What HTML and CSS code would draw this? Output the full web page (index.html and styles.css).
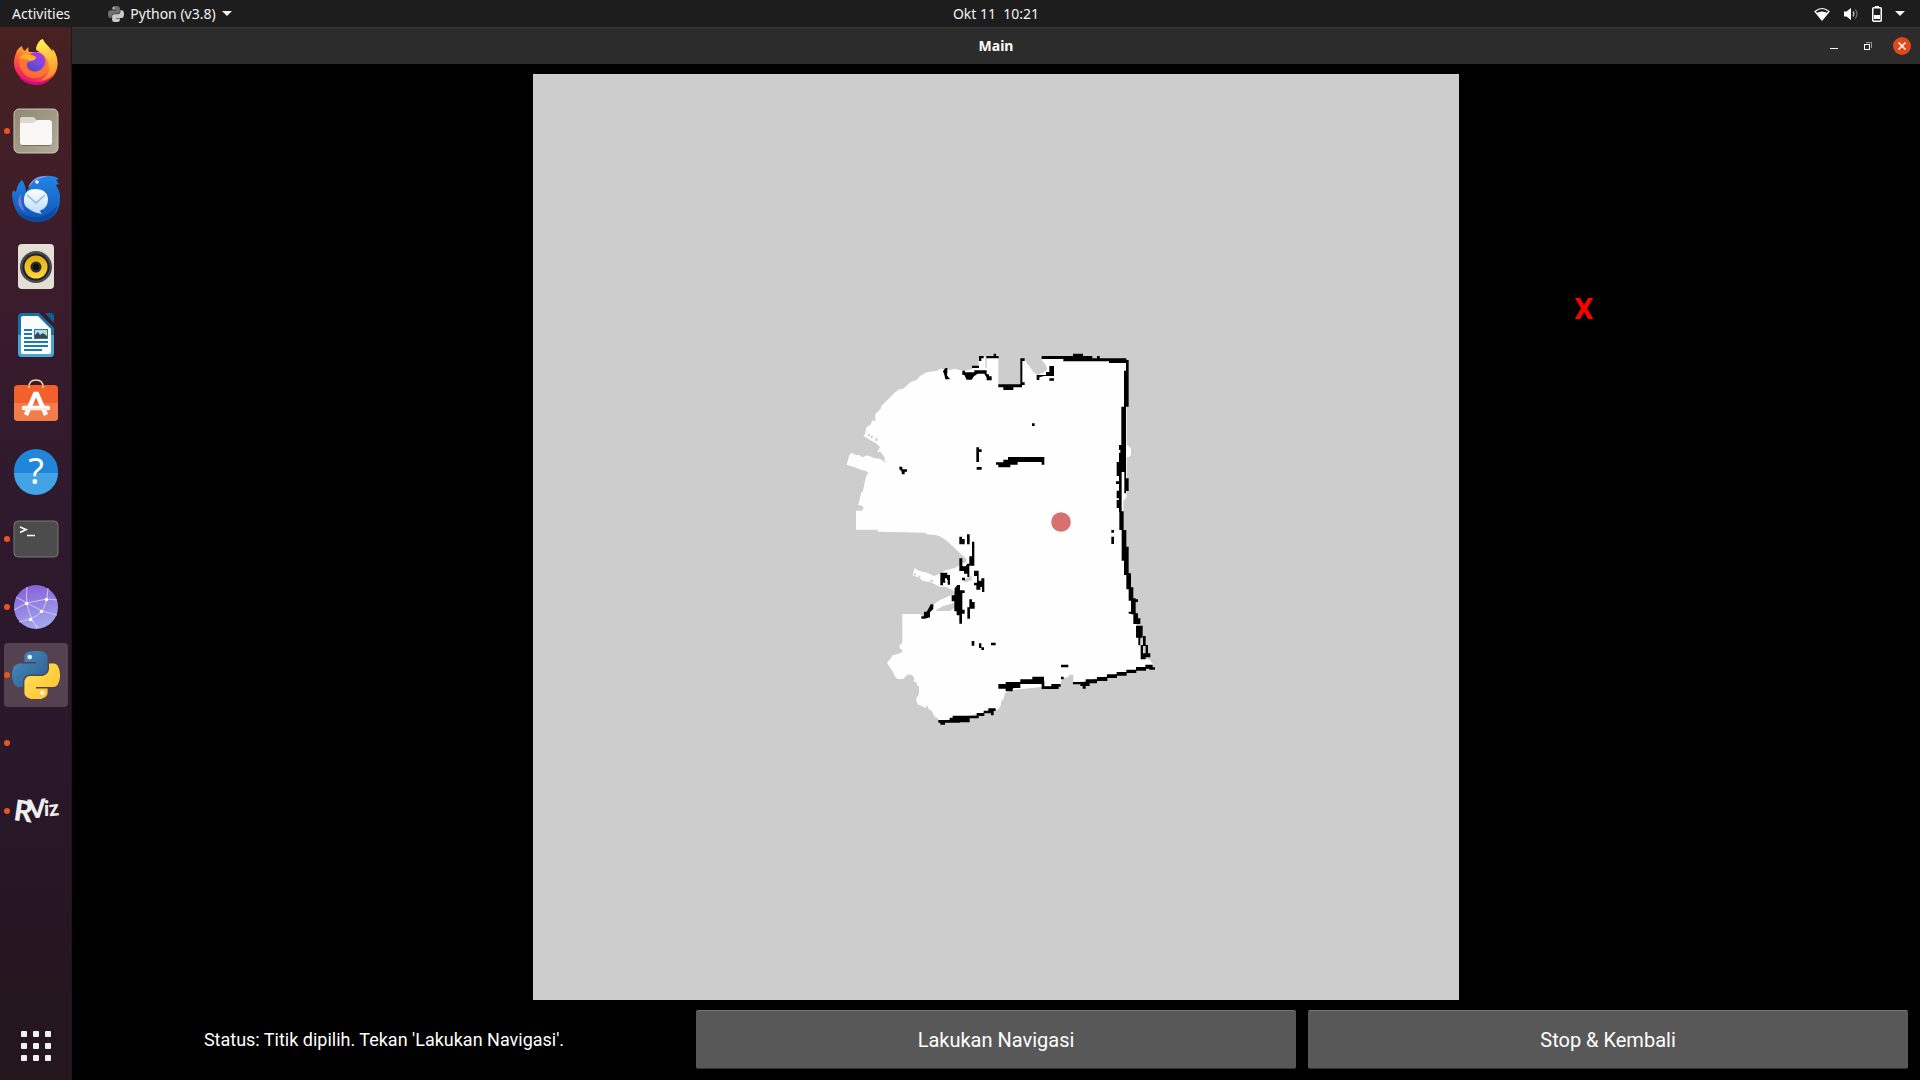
FILE: index.html
```html
<!DOCTYPE html>
<html lang="id">
<head>
<meta charset="utf-8">
<meta name="viewport" content="width=device-width, initial-scale=1">
<title>Main</title>
<link rel="stylesheet" href="styles.css">
</head>
<body>
<svg class="defs" aria-hidden="true">
  <defs>
    <path id="snake-a" d="M54.919 0c-4.584.021-8.961.412-12.813 1.094C30.76 3.099 28.7 7.295 28.7 15.032v10.219h26.813v3.406H18.637c-7.792 0-14.616 4.684-16.75 13.594c-2.462 10.213-2.571 16.586 0 27.25c1.906 7.938 6.458 13.594 14.25 13.594h9.219v-12.25c0-8.85 7.657-16.656 16.75-16.656h26.781c7.455 0 13.406-6.138 13.406-13.625v-25.53c0-7.266-6.13-12.725-13.406-13.937C64.282.328 59.502-.02 54.919 0z"/>
    <path id="snake-b" d="M85.638 28.657v11.906c0 9.231-7.826 17-16.75 17H42.106c-7.336 0-13.406 6.279-13.406 13.625v25.531c0 7.266 6.319 11.54 13.406 13.625c8.488 2.496 16.627 2.947 26.781 0c6.75-1.954 13.406-5.888 13.406-13.625V86.501H55.513v-3.406H95.7c7.792 0 10.696-5.435 13.406-13.594c2.799-8.399 2.68-16.476 0-27.25c-1.926-7.757-5.604-13.594-13.406-13.594H85.638z"/>
    <linearGradient id="fx-body" x1=".8" y1="0" x2=".3" y2="1"><stop offset="0" stop-color="#fff44f"/><stop offset=".35" stop-color="#ffb02e"/><stop offset=".65" stop-color="#ff5a36"/><stop offset="1" stop-color="#e80a72"/></linearGradient>
    <linearGradient id="fx-core" x1=".7" y1="0" x2=".3" y2="1"><stop offset="0" stop-color="#b833e1"/><stop offset=".5" stop-color="#7a4be8"/><stop offset="1" stop-color="#5148b8"/></linearGradient>
    <linearGradient id="fx-tail" x1=".3" y1="0" x2=".5" y2="1"><stop offset="0" stop-color="#fff44f"/><stop offset="1" stop-color="#ff8a2a"/></linearGradient>
    <linearGradient id="files" x1="0" y1="0" x2="1" y2="1"><stop offset="0" stop-color="#8f8873"/><stop offset="1" stop-color="#b2ac98"/></linearGradient>
    <linearGradient id="tb" x1="0" y1="0" x2="0" y2="1"><stop offset="0" stop-color="#2186e8"/><stop offset="1" stop-color="#1053b0"/></linearGradient>
    <linearGradient id="mail" x1="0" y1="0" x2="0" y2="1"><stop offset="0" stop-color="#fff"/><stop offset="1" stop-color="#b5dbfa"/></linearGradient>
    <linearGradient id="cone" x1="0" y1="0" x2="0" y2="1"><stop offset="0" stop-color="#e0ac0c"/><stop offset="1" stop-color="#ffd83a"/></linearGradient>
    <linearGradient id="web" x1="0" y1="0" x2=".3" y2="1"><stop offset="0" stop-color="#8758d8"/><stop offset="1" stop-color="#9fa5ee"/></linearGradient>
    <linearGradient id="py-a" x1="0" y1="0" x2="1" y2="1"><stop offset="0" stop-color="#4590c8"/><stop offset="1" stop-color="#2c5b86"/></linearGradient>
    <linearGradient id="py-b" x1="0" y1="0" x2="1" y2="1"><stop offset="0" stop-color="#ffe562"/><stop offset="1" stop-color="#ffbd24"/></linearGradient>
  </defs>
</svg>

<header class="topbar">
  <div class="topbar-left">
    <button class="bar-button">Activities</button>
    <button class="bar-button app-menu">
      <svg class="app-icon" viewBox="0 0 111 111" aria-hidden="true"><use href="#snake-a" fill="#707070"/><use href="#snake-b" fill="#c9c9c9"/><circle cx="41" cy="14" r="6" fill="#eee"/></svg>
      <span>Python (v3.8)</span>
      <svg class="caret" viewBox="0 0 10 5" aria-hidden="true"><path d="M0 0h10L5 5z"/></svg>
    </button>
  </div>
  <button class="bar-button clock">Okt 11&nbsp; 10:21</button>
  <button class="bar-button tray" aria-label="System menu">
    <svg width="16" height="14" viewBox="0 0 16 14"><path d="M1 4.500Q8-1.500 15 4.500L8 13z" fill="none" stroke="#fff" stroke-width="1.200"/><path d="M8 13L2.500 6Q8 3 13.500 6z" fill="#fff"/></svg>
    <svg width="16" height="14" viewBox="0 0 16 14"><path d="M1 4.500h2.500L8 1v12L3.500 9.500H1z" fill="#fff"/><path d="M10 4.500q1.800 2.500 0 5" fill="none" stroke="#bbb" stroke-width="1.300"/><path d="M12.300 2.500q3.400 4.500 0 9" fill="none" stroke="#777" stroke-width="1.200"/></svg>
    <svg width="10" height="16" viewBox="0 0 10 16"><path d="M3 0h4v2H3z" fill="#fff"/><rect x=".75" y="1.750" width="8.500" height="13.500" rx="1" fill="none" stroke="#fff" stroke-width="1.500"/><path d="M2 9h6v4H2z" fill="#fff"/></svg>
    <svg class="caret" viewBox="0 0 10 5"><path d="M0 0h10L5 5z"/></svg>
  </button>
</header>

<div class="desktop">
  <nav class="dock" aria-label="Dock">
    <button class="dock-item" aria-label="Firefox">
      <svg viewBox="0 0 48 48">
        <path d="M3 17Q5 9 10 7q0 3 3 5q2-3 3.500-4q-.5 3 .5 5h10l-3-4Q26 2 30.500 0q3 5 6 7.500Q39 10 40.500 13v-3q2 2 3 5q6 15-5 25Q24 51 9 39Q-1 29 3 17z" fill="url(#fx-body)"/>
        <path d="M24 11Q25 3 30.500 0q2 5 6 8q3 3 4 6v-4q7 9 4 19q-4 11-17 13q12-6 10-17Q35 15 24 11z" fill="url(#fx-tail)"/>
        <circle cx="24" cy="23" r="10" fill="url(#fx-core)"/>
        <path d="M8 20q2-4 8-5q5 1 8 3q0 4-6 4q-3 1-3.500 4q.5 4 4 6q6 2 11-2q5-5 3-12q6 7 2 15q-4 6-12 6T11 33Q6 27 8 20z" fill="#ff7a30" opacity=".8"/>
        <path d="M7 19q3-4 9-4q5 1 8 3q0 3-6 4q-5-3-11-3z" fill="#ffac28"/>
        <path d="M6 36q7 7 18 7t17-6q-7 10-18 9Q11 45 6 36z" fill="#d70a7a"/>
      </svg>
    </button>
    <button class="dock-item running" aria-label="Files">
      <svg viewBox="0 0 48 48"><rect x="2" y="2" width="44" height="44" rx="5" fill="url(#files)" stroke="#cbc7b8"/><path d="M8 24V12q0-2 2-2h11q2 0 3 3l3 3z" fill="#dcd8cc"/><path d="M8 17q0-1 1-1h11q2 0 3-1.500t3-1.500h11q3 0 3 3v19q0 3-3 3H11q-3 0-3-3z" fill="#f9f8f7"/><path d="M10 38.500h28" stroke="#77715f"/></svg>
    </button>
    <button class="dock-item" aria-label="Thunderbird">
      <svg viewBox="0 0 48 48"><path d="M0 18l2-3q1 2 2 2q1-8 6-12q4 6 4 12l3-4Q20 1 32 1q10-1 15 3l-3 1l3 4l-3 1q5 7 4 16q-2 20-23 21Q1 46 0 18z" fill="url(#tb)"/><path d="M16 13Q20 1 36 1L26 4q-6 2-8 7z" fill="#b58cec"/><circle cx="25" cy="7" r="1.800" fill="#fff"/><path d="M2 26q3 14 18 16t25-11q-4 16-20 16T2 26z" fill="#0c4aa0"/><path d="M9 19q-7 10 4 18q-5-8-4-18z" fill="#8176df"/><path d="M12 23q1-9 12-9t12 10q0 9-7 11q-2 1 1 4q-8-1-13-5q-6-3-5-11z" fill="url(#mail)"/><path d="M15 20l9 8l9-8" fill="none" stroke="#8eb8d8" stroke-width="1.500"/></svg>
    </button>
    <button class="dock-item" aria-label="Rhythmbox">
      <svg viewBox="0 0 48 48"><rect x="6" y="1" width="36" height="45" rx="4" fill="#e4dfd4"/><circle cx="24" cy="24" r="16" fill="#4a4a52"/><circle cx="24" cy="24" r="13.500" fill="#20202a"/><circle cx="24" cy="24" r="11.500" fill="url(#cone)"/><circle cx="24" cy="24" r="5.500" fill="#2b2b2d"/><circle cx="24" cy="24" r="3" fill="#111"/></svg>
    </button>
    <button class="dock-item" aria-label="LibreOffice Writer">
      <svg viewBox="0 0 48 48"><path d="M10 2h17l15 15v25q0 4-4 4H10q-4 0-4-4V6q0-4 4-4z" fill="#1672a5"/><path d="M6 24h36v18q0 4-4 4H10q-4 0-4-4z" fill="#4aa6d2"/><path d="M33 2h6q3 0 3 3v7z" fill="#0d5f91"/><path d="M11 5h15l13 13v23q0 2-2 2H11q-2 0-2-2V7q0-2 2-2z" fill="#fcfcfc"/><path d="M12 19h8M12 23h8M12 27h8M12 31h24M12 35h24M12 39h18" stroke="#1d7ab0" stroke-width="2"/><path d="M22 18h14v10H22z" fill="#1d7ab0"/><path d="M23 19h12v8H23z" fill="#a9dff5"/><path d="M23 27v-3l3-3l2 3l3-2l4 3v2z" fill="#444"/><path d="M32 19h3v3z" fill="#fc0"/></svg>
    </button>
    <button class="dock-item" aria-label="Ubuntu Software">
      <svg viewBox="0 0 48 48"><path d="M17 8q0-7 7-7t7 7" fill="none" stroke="#f3d3a6" stroke-width="1.500"/><rect x="2" y="6" width="44" height="36" rx="4" fill="#f4602c"/><path d="M2 24h44v14q0 4-4 4H6q-4 0-4-4z" fill="#f37d4a"/><path d="M17 9V6.500M31 9V6.500" stroke="#f3d3a6" stroke-width="1.500"/><path d="M14 36l9-21h2l9 21" fill="none" stroke="#fff" stroke-width="4.500"/><path d="M12 29h24" stroke="#fff" stroke-width="4.500" stroke-linecap="round"/><path d="M12 30h24" stroke="#f6d6c6"/></svg>
    </button>
    <button class="dock-item" aria-label="Help">
      <svg viewBox="0 0 48 48"><circle cx="24" cy="24" r="22" fill="#2086d9"/><path d="M2 26h44a22 22 0 0 1-44 0z" fill="#42a3e5"/><text class="help-mark" x="24" y="37" text-anchor="middle">?</text></svg>
    </button>
    <button class="dock-item running" aria-label="Terminal">
      <svg viewBox="0 0 48 48"><rect x="2" y="6" width="44" height="36" rx="4" fill="#4c4c4c" stroke="#777"/><path d="M8 12l6 2.500L8 17.500M15 20.500h8" fill="none" stroke="#fff" stroke-width="1.700"/></svg>
    </button>
    <button class="dock-item running" aria-label="Web">
      <svg viewBox="0 0 48 48"><circle cx="24" cy="24" r="22" fill="url(#web)"/><path d="M15 4q-3 22 10 41M36 5q0 26-18 31L7 39M2 27l13-7L35 16l10 1M4 14l11 6l15 8l15 4M18 36l9 9" fill="none" stroke="#d5c5f4" stroke-width="1"/><g fill="#fff"><circle cx="14.500" cy="20.500" r="1.700"/><circle cx="34.500" cy="16.500" r="1.700"/><circle cx="29.500" cy="28.500" r="1.700"/><circle cx="18.500" cy="36.500" r="1.700"/></g></svg>
    </button>
    <button class="dock-item running active" aria-label="Python (v3.8)">
      <svg viewBox="0 0 111 111"><use href="#snake-a" fill="url(#py-a)"/><use href="#snake-b" fill="url(#py-b)"/><circle cx="41" cy="14" r="5.500" fill="#e4f2ff"/><circle cx="70" cy="97" r="5.500" fill="#fff6c8"/></svg>
    </button>
    <button class="dock-item running" aria-label="Application"></button>
    <button class="dock-item running" aria-label="RViz">
      <svg viewBox="0 0 48 48"><g class="rviz"><text x="2" y="34" font-size="29" transform="rotate(8 8 24)">R</text><text x="16" y="31" font-size="26" transform="rotate(-4 22 24)">V</text><text x="32" y="29" font-size="20">i</text><text x="37" y="29" font-size="22" transform="rotate(-6 40 24)">z</text></g></svg>
    </button>
    <button class="dock-item show-apps" aria-label="Show Applications">
      <svg viewBox="0 0 48 48" fill="#f2f1f0"><rect x="9" y="9" width="6" height="6" rx="1"/><rect x="21" y="9" width="6" height="6" rx="1"/><rect x="33" y="9" width="6" height="6" rx="1"/><rect x="9" y="21" width="6" height="6" rx="1"/><rect x="21" y="21" width="6" height="6" rx="1"/><rect x="33" y="21" width="6" height="6" rx="1"/><rect x="9" y="33" width="6" height="6" rx="1"/><rect x="21" y="33" width="6" height="6" rx="1"/><rect x="33" y="33" width="6" height="6" rx="1"/></svg>
    </button>
  </nav>

  <main class="window">
    <div class="titlebar">
      <h1 class="title">Main</h1>
      <div class="window-controls">
        <button class="control" aria-label="Minimize"><svg viewBox="0 0 18 18"><path d="M5 11.500h8" stroke="#fff"/></svg></button>
        <button class="control" aria-label="Restore"><svg viewBox="0 0 18 18" fill="none"><path d="M7 5.500h5.500V11" stroke="#999"/><rect x="5.500" y="7.500" width="5" height="5" stroke="#fff"/></svg></button>
        <button class="control close" aria-label="Close"><svg viewBox="0 0 18 18"><path d="M5.500 5.500l7 7M12.500 5.500l-7 7" stroke="#fff" stroke-width="1.500"/></svg></button>
      </div>
    </div>
    <div class="content">
      <div class="map-area">
        <svg class="map" viewBox="0 0 926 926" role="img" aria-label="Peta">
          <rect width="926" height="926" fill="#cdcdcd"/>
          <g transform="translate(307 266) scale(.33333)">
            <!-- free space -->
            <path fill="#fefefe" d="M420 50H475V136H545V58H554L562 72L570 80L578 94L592 106L603 100L610 98L618 92L622 86L614 70L606 62V52L700 56L860 64V315L866 318L873 326V345L866 352H860V470L850 484L850 570L862 690L884 830L915 955L930 960L940 975L930 980L700 1030V1004H686V1010L672 1014L662 1024V1035L610 1040L520 1050L496 1058L490 1078L484 1084L482 1098L472 1110L460 1112L300 1144L292 1134L284 1130L276 1114L265 1106L262 1096L256 1104L246 1098L234 1094L229 1084V1074L237 1062V1040L230 1034V1028L220 1022L224 1016L216 1004H202L190 1017H173L165 1010L158 994L151 984L142 970V966L152 956L158 946L180 940L187 935V930L179 925V915L187 908V822H240L250 830L275 797L300 780L342 762L340 752L318 740L300 740L270 726L250 723L238 714L218 705L224 684L236 692L262 698L282 708L298 702L318 690L345 684L358 676L378 665L380 658L360 640L345 625L320 602L302 590L290 586L260 583L256 578L115 575L111 569H48V512H66L71 503L66 497L55 495L58 482L64 456H68L74 428L80 405L86 400L76 392L64 390L45 382L34 379L20 374L28 345L36 338L48 346L58 345L66 352L82 346L102 354L118 356L140 368L158 372L170 377V385L152 382L146 372L134 362V352L122 336H112L120 322L108 310L94 302L80 293L70 288L76 280L79 262L92 254L96 242H106V222L122 206L124 198L152 170L166 156L178 148L190 146L212 126L230 120L240 108L260 97L292 92L300 86L310 88L330 90L345 86L372 94L395 88L404 78H416V62L420 60Z"/>
            <g fill="#cdcdcd">
              <path d="M287 811L310 798L345 788L352 798L330 813H290ZM436 50h4v34h-4zM84 282h6v6h-6zM92 288h6v6h-6zM106 295h7v7h-7zM368 722L386 712L395 708V720L378 727ZM222 700h6v6h-6zM235 707h6v6h-6zM271 719h8v6h-8z"/>
            </g>
            <!-- north wall and its clutter -->
            <path d="M417 48h14v7h-7v8h-7zM439 48h22v-7h7v7h8v7h-37zM396 77h21v7h-21zM309 94l7-10h6v12l-1 10l9 12h-14l-3-14zM367 92h8v5h28v-6h37v12h7v6h8v12h-15v-8l-7-12h-20l-11 8l-7 10h-15l-7-14h-6zM475 133h66V55h13v8h-7v64h7v8h-8v7h-26v8h-30v-8h-15zM605 48h94v-7h30v7h28v7h14v-7h8v7h80v14h-52v-5H670v-7h-65zM590 105h28v-9h10V78h14v30h-30l-14 4v8h-8zM628 115h14v7h-14zM576 250h8v8h-8z"/>
            <!-- obstacles -->
            <path d="M409 322h8v6h8v8h-8v30h-8zM410 381h15v8h-15zM468 367h22v-8h14v-8h109v23h-8v-8h-72v8h-22v8h-36v-8h-7zM178 380h9v8h14v7h-7v8h-8l-2-10l-6-5z"/>
            <!-- east wall -->
            <path d="M858 60h8v34h-8zM852 92h14v108h-14zM844 200h14v116h-14zM837 315h8v15h-8zM841 316h17v24h-17zM837 338h21v58h-21zM830 366h15v42h-15zM837 396h8v120h-8zM853 390h5v70h-5zM853 415h13v38h-13zM828 424h10v8h-10zM830 452h10v23h-10zM830 480h10v24h-10zM838 514h13v56h-13zM845 570h14v92h-14zM852 620h14v85h-14zM859 700h14v48h-14zM866 742h14v40h-14zM873 775h14v48h-14zM866 815h12v6h-12zM887 778h7v8h-7zM880 820h14v32h-14zM888 835h13v17h-13zM888 857h20v36h-20zM895 890h6v26h-6zM909 888h8v30h-8zM902 915h7v43h-7zM917 915h7v25h-7zM904 940h27v12h-27zM904 950h13v8h-13z"/>
            <path d="M814 570h8v8h-8zM814 590h8v22h-8z"/>
            <!-- west clutter -->
            <path d="M358 590h8v7h8v16h-16zM381 583h8v30h-8zM396 605h7v72h-15v-28h8zM358 655h9v24h10l5-8h6v40h-6v-10h-10v-8h-14zM402 692h14v30h8v-7h9v41h-7v-15h-5v8h-12v-13h-7v-8h9v-20h-9zM301 698h21v7h8v29h-7v-14h-7v8h-7v8h-8zM366 713h9v8h-9zM344 745l8-10h8v16h14v8h-7v50h7v12h-8v30h-8v-25h-8v-12h-7v-30h-8v-18h8zM388 778h8v8h8v20h-14v30h-8v-34h6zM272 793h8v14l-10 10v15l-16 4h-10v-7h8v-14h8l6-10zM395 903h8v14h-8zM417 910h7v12h8v8h-8v-6h-7zM453 908h14v8h-14z"/>
            <!-- south wall -->
            <path d="M663 974h22v8h-22zM663 1010h8v8h-8zM475 1032h45v14h-45zM497 1026h44v18h-44zM497 1044h21v10h-21zM541 1018h71v14h-71zM577 1010h35v12h-35zM605 1022h8v24h-8zM605 1039h51v8h-51zM634 1032h28v8h-28zM699 1026h50v7h-50zM721 1032h28v6h-28zM728 1038h9v8h-9zM737 1018h34v12h-34zM771 1011h31v12h-31zM801 1003h30v11h-30zM830 996h30v11h-30zM859 989h30v10h-30zM888 981h30v11h-30zM916 974h22v12h-22zM928 982h17v7h-17z"/>
            <path d="M295 1140h65v8h-65zM301 1148h14v6h-14zM329 1133h60v14h-60zM338 1127h78v8h-78zM338 1133h50v8h-50zM410 1119h23v9h-23zM431 1112h30v8h-30zM445 1105h22v8h-22zM453 1112h8v14h-8z"/>
            <path fill="#fefefe" d="M315 715h6v8h-6z"/>
            <circle cx="663" cy="546" r="29.500" fill="#d97070"/>
          </g>
        </svg>
        <span class="marker">X</span>
      </div>
      <div class="actions">
        <p class="status" role="status">Status: Titik dipilih. Tekan 'Lakukan Navigasi'.</p>
        <button class="action">Lakukan Navigasi</button>
        <button class="action">Stop &amp; Kembali</button>
      </div>
    </div>
  </main>
</div>
</body>
</html>
```
FILE: styles.css
```css
* { box-sizing: border-box; }

body {
  margin: 0;
  height: 100vh;
  display: flex;
  flex-direction: column;
  overflow: hidden;
  background: #000;
  color: #fff;
  font-family: "Noto Sans", sans-serif;
}

button {
  margin: 0;
  padding: 0;
  border: 0;
  background: none;
  color: inherit;
  font: inherit;
}

svg { display: block; }

.defs {
  position: absolute;
  width: 0;
  height: 0;
}

.topbar {
  flex: none;
  height: 27px;
  display: grid;
  grid-template-columns: 1fr auto 1fr;
  align-items: center;
  padding: 0 15px 0 87px;
  background: #1d1d1d;
  color: #f2f2f2;
  font-size: 14px;
  line-height: 26px;
}

.topbar-left {
  display: flex;
  gap: 38px;
  margin-left: -75px;
}

.app-menu,
.tray {
  display: flex;
  align-items: center;
}

.app-menu { gap: 6px; }

.app-icon {
  width: 16px;
  height: 16px;
}

.caret {
  width: 10px;
  height: 5px;
  fill: #f2f2f2;
}

.tray {
  justify-self: end;
  gap: 13px;
}

.desktop {
  flex: 1;
  min-height: 0;
  display: flex;
}

.dock {
  flex: none;
  width: 72px;
  display: flex;
  flex-direction: column;
  gap: 4px;
  padding: 4px 4px 2px;
  border-right: 1px solid #1d1518;
  background: linear-gradient(#482120, #3b1c2c 24%, #2f192d 45%, #29172a 70%, #23161c);
}

.dock-item {
  position: relative;
  flex: none;
  width: 64px;
  height: 64px;
  display: grid;
  place-items: center;
  border-radius: 4px;
}

.dock-item svg {
  width: 48px;
  height: 48px;
}

.dock-item.active { background: #544250; }

.running::before {
  content: "";
  position: absolute;
  left: 0;
  top: 29px;
  width: 6px;
  height: 6px;
  border-radius: 50%;
  background: #e95420;
}

.show-apps { margin-top: auto; }

.help-mark {
  fill: #fff;
  font: 36px "Noto Sans", sans-serif;
}

.rviz {
  fill: #eee;
  font-family: Lato, sans-serif;
  font-weight: 900;
}

.window {
  flex: 1;
  min-width: 0;
  display: flex;
  flex-direction: column;
}

.titlebar {
  flex: none;
  height: 37px;
  display: grid;
  grid-template-columns: 1fr auto 1fr;
  align-items: center;
  padding: 0 9px;
  border-top: 1px solid #3a3a3a;
  background: #2c2c2c;
}

.title {
  grid-column: 2;
  margin: 0;
  font-size: 14px;
  line-height: 20px;
  font-weight: 700;
}

.window-controls {
  justify-self: end;
  display: flex;
  gap: 16px;
}

.control {
  width: 18px;
  height: 18px;
  border-radius: 50%;
}

.close { background: #e2481a; }

.content {
  flex: 1;
  min-height: 0;
  display: flex;
  flex-direction: column;
  gap: 10px;
  padding: 10px 12px 11px;
}

.map-area {
  position: relative;
  flex: 1;
  min-height: 0;
}

.map {
  width: 100%;
  height: 100%;
}

/* Destination mark, placed over the canvas */
.marker {
  position: absolute;
  left: 81.7%;
  top: 23.8%;
  color: #f00;
  font: 700 30px/30px Roboto, sans-serif;
}

.actions {
  display: grid;
  grid-template-columns: repeat(3, 1fr);
  gap: 12px;
  align-items: center;
  font-family: Roboto, sans-serif;
}

.status {
  margin: 0;
  font-size: 18px;
  line-height: 24px;
  text-align: center;
}

.action {
  height: 59px;
  border-top: 1px solid #777;
  border-bottom: 1px solid #333;
  border-radius: 2px;
  background: #585858;
  font-size: 20px;
}
```
